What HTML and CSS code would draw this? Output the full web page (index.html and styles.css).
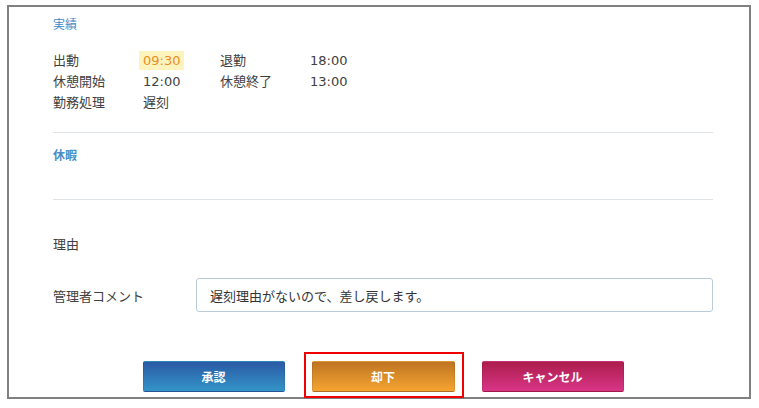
FILE: index.html
```html
<!DOCTYPE html>
<html lang="ja">
<head>
<meta charset="utf-8">
<link rel="stylesheet" href="styles.css">
</head>
<body>
<div class="frame">
  <section class="section">
    <h2 class="heading">実績</h2>
    <div class="grid">
      <div class="lbl">出動</div><div class="val"><span class="hl">09:30</span></div>
      <div class="lbl">退勤</div><div class="val">18:00</div>
      <div class="lbl">休憩開始</div><div class="val">12:00</div>
      <div class="lbl">休憩終了</div><div class="val">13:00</div>
      <div class="lbl">勤務処理</div><div class="val">遅刻</div>
    </div>
  </section>
  <hr class="sep sep1">
  <section class="section">
    <h2 class="heading heading-bold">休暇</h2>
  </section>
  <hr class="sep sep2">
  <div class="reason">理由</div>
  <div class="comment-row">
    <label class="comment-label">管理者コメント</label>
    <div class="input">遅刻理由がないので、差し戻します。</div>
  </div>
  <div class="actions">
    <button class="btn btn-blue">承認</button>
    <div class="focus-wrap">
      <button class="btn btn-orange">却下</button>
      <span class="focus-ring"></span>
    </div>
    <button class="btn btn-pink">キャンセル</button>
  </div>
</div>
</body>
</html>
```

FILE: styles.css
```css
* { box-sizing: border-box; }
html, body { margin: 0; padding: 0; background: #fff; }
body {
  font-family: "DejaVu Sans", "Noto Sans CJK JP", sans-serif;
  font-size: 13px;
  color: #404040;
}
.frame {
  margin: 5px 0 0 7px;
  width: 744px;
  height: 394px;
  border: 2px solid #808080;
  padding: 8px 36px 0 44px;
}
.heading {
  margin: 0;
  font-size: 12px;
  line-height: 20px;
  font-weight: normal;
  color: #3f8bc6;
}
.heading-bold { font-weight: bold; color: #4a8ec4; }
.grid {
  display: grid;
  grid-template-columns: 90px 77px 90px auto;
  grid-auto-rows: 21px;
  margin-top: 15px;
  align-items: center;
  line-height: 21px;
}
.hl {
  display: inline-block;
  margin-left: -4px;
  padding: 0 4px;
  background: #fcf3bd;
  color: #e98d26;
  line-height: 19px;
}
.sep {
  border: 0;
  border-top: 1px solid #dde3e6;
  margin: 0;
}
.sep1 { margin-top: 19px; }
.section + .sep2 { margin-top: 33px; }
.sep1 + .section { margin-top: 13px; }
.reason { margin-top: 35px; line-height: 20px; }
.comment-row {
  display: flex;
  align-items: center;
  margin-top: 23px;
}
.comment-label { width: 143px; }
.input {
  flex: 1;
  height: 34px;
  border: 1px solid #b9cadb;
  border-radius: 3px;
  padding: 0 13px;
  display: flex;
  align-items: center;
  color: #333;
}
.actions {
  display: flex;
  justify-content: center;
  gap: 27px;
  margin-top: 49px;
}
.btn {
  width: 142px;
  height: 31px;
  border-radius: 2px;
  border: 1px solid rgba(0,0,0,0.08);
  color: #fff;
  font-family: "Noto Sans CJK JP", sans-serif;
  font-weight: bold;
  font-size: 12px;
  padding: 0;
}
.btn-blue { background: linear-gradient(#2b5aa6, #3394c8); }
.btn-orange { background: linear-gradient(#be7522, #f6a431); width: 143px; }
.btn-pink { background: linear-gradient(#ac1d4c, #d93587); }
.focus-wrap { position: relative; display: flex; }
.focus-ring {
  position: absolute;
  left: -8px;
  right: -9px;
  top: -9px;
  bottom: -6px;
  border: 2px solid #f00000;
  pointer-events: none;
}
```
